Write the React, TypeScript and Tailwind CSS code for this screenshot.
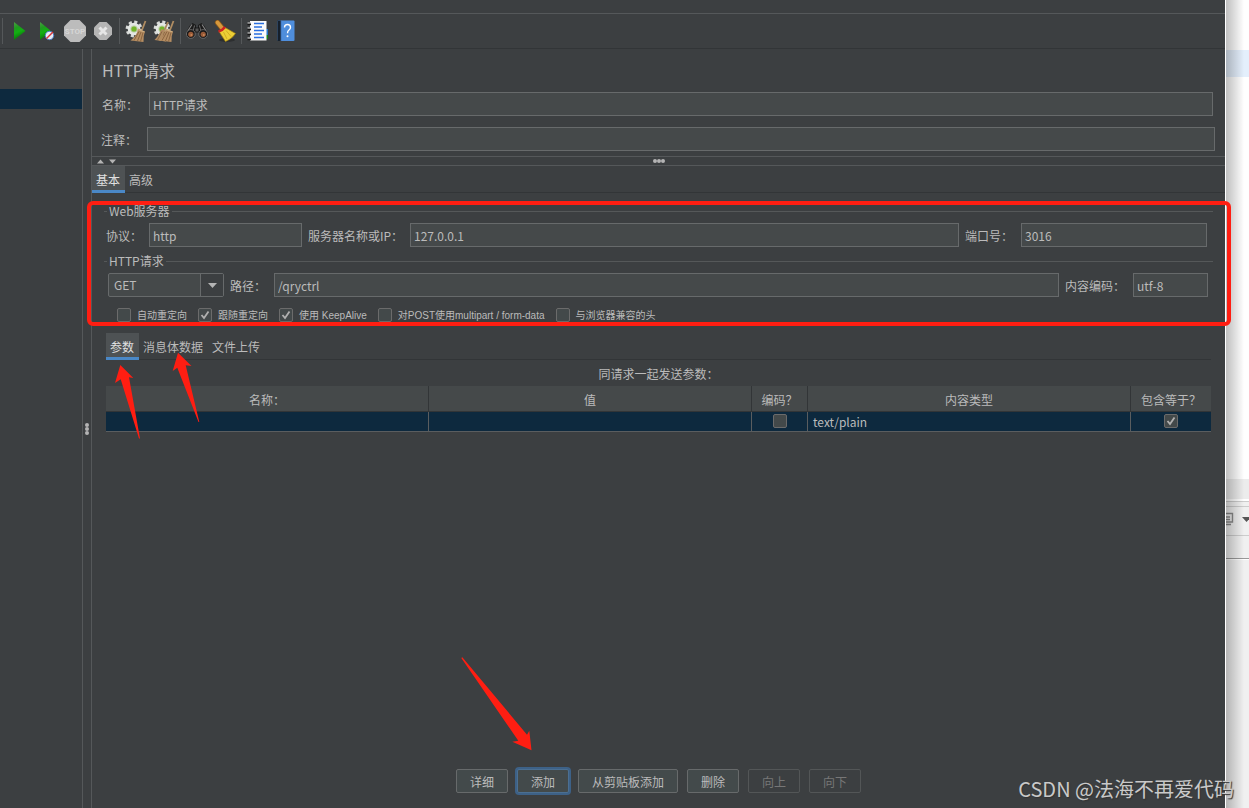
import { useState } from "react";
import type { ReactNode } from "react";

const FIELD =
  "h-6 min-w-0 border border-[#676a6b] bg-[#45494a] px-[3px] text-[#bbbbbb] outline-none";

function PlayIcon({ muted }: { muted?: boolean }) {
  return (
    <svg width="22" height="22" viewBox="0 0 22 22">
      <defs>
        <linearGradient id="play" x1="0" y1="0" x2="0.3" y2="1">
          <stop offset="0" stopColor="#4c9c44" />
          <stop offset="0.35" stopColor="#1f9a1f" />
          <stop offset="0.6" stopColor="#12b012" />
          <stop offset="1" stopColor="#0a6c0a" />
        </linearGradient>
      </defs>
      {muted ? (
        <>
          <path d="M4 2L15 11L4 20Z" fill="url(#play)" />
          <circle cx="13.500" cy="15.500" r="4.200" fill="#e6ecf5" stroke="#4b7cc4" strokeWidth="1" />
          <path d="M10.500 18.500L17 12" stroke="#d8363a" strokeWidth="1.500" />
        </>
      ) : (
        <path d="M6 2L17.500 11L6 20Z" fill="url(#play)" />
      )}
    </svg>
  );
}

function StopIcon() {
  return (
    <svg width="22" height="22" viewBox="0 0 22 22">
      <path d="M6.500 0H15.500L22 6.500V15.500L15.500 22H6.500L0 15.500V6.500Z" fill="#bcbcbc" />
      <text
        x="11"
        y="14"
        textAnchor="middle"
        fontSize="8"
        fontFamily="Roboto, sans-serif"
        fontWeight="bold"
        fill="#d6d6d6"
      >
        STOP
      </text>
    </svg>
  );
}

function ShutdownIcon() {
  return (
    <svg width="22" height="22" viewBox="0 0 22 22">
      <path d="M7.500 2H14.500L20 7.500V14.500L14.500 20H7.500L2 14.500V7.500Z" fill="#b5b5b5" />
      <path d="M7.500 7.500L14.500 14.500M14.500 7.500L7.500 14.500" stroke="#e6e6e6" strokeWidth="3" />
    </svg>
  );
}

function Gear() {
  return (
    <>
      <circle cx="9" cy="9" r="7" fill="none" stroke="#d9dbd9" strokeWidth="2.800" strokeDasharray="3.100 2.400" />
      <circle cx="9" cy="9" r="6.300" fill="#e4e7e4" />
      <circle cx="9" cy="9" r="3.600" fill="#b9cda0" />
      <circle cx="9" cy="9" r="2.600" fill="#73b52a" />
    </>
  );
}

function SweepIcon({ all }: { all?: boolean }) {
  return (
    <svg width="22" height="22" viewBox="0 0 22 22">
      <Gear />
      {all && (
        <>
          <path d="M15 2L11.500 10" stroke="#a8865c" strokeWidth="1.800" />
          <path d="M8 9L14 11L13 21.500L1.500 20Q6.500 15 8 9Z" fill="#b08a61" />
          <path d="M9 11.500L4.500 20M11.500 12L9 21" stroke="#7f5d3b" strokeWidth="0.800" />
        </>
      )}
      <path d="M20.500 1L17 10" stroke="#b08d62" strokeWidth="1.800" />
      <path d="M13 8.500L20 11.500Q18 16 18.500 22L5.500 20.500Q12 16 13 8.500Z" fill="#b58d62" />
      <path
        d="M14 11.500L9 20.500M16 12L12.500 21M18 12.500L15.500 21.500"
        stroke="#84603c"
        strokeWidth="0.900"
      />
      <path d="M13 9.500L19.500 12" stroke="#cfae82" strokeWidth="1.200" />
    </svg>
  );
}

function BinocularsIcon() {
  return (
    <svg width="22" height="22" viewBox="0 0 22 22">
      <path d="M6.500 3L10 5V11L9 13L0 16Q0.500 10 3.500 6Z" fill="#1b1b1b" />
      <path d="M15.500 3L12 5V11L13 13L22 16Q21.500 10 18.500 6Z" fill="#1b1b1b" />
      <path d="M6 4.500L1.800 11M16 4.500L20.200 11" stroke="#858585" strokeWidth="1.100" />
      <path d="M8.500 5.500L7.500 10M13.500 5.500L14.500 10" stroke="#777777" strokeWidth="0.900" />
      <rect x="9" y="8" width="4" height="4" fill="#555555" stroke="#111" strokeWidth="0.800" />
      <circle cx="4.800" cy="14" r="4.400" fill="#191919" stroke="#777" strokeWidth="0.800" />
      <circle cx="17.200" cy="14" r="4.400" fill="#191919" stroke="#777" strokeWidth="0.800" />
      <circle cx="4.800" cy="14.300" r="2.600" fill="#9a5b38" />
      <circle cx="17.200" cy="14.300" r="2.600" fill="#9a5b38" />
      <circle cx="5.400" cy="14.900" r="1" fill="#c9875a" />
      <circle cx="17.800" cy="14.900" r="1" fill="#c9875a" />
    </svg>
  );
}

function BroomIcon() {
  return (
    <svg width="22" height="22" viewBox="0 0 22 22">
      <ellipse cx="13" cy="20" rx="8" ry="1.800" fill="#2d2f30" />
      <path d="M3.500 2.500L8 8" stroke="#8b5a1b" strokeWidth="5.200" strokeLinecap="round" />
      <path d="M3.500 2.500L8 8" stroke="#d7993d" strokeWidth="3.600" strokeLinecap="round" />
      <path d="M11 7.500L21.500 13.500Q18 19 11.500 21.500L5 11.500Z" fill="#edcf36" stroke="#a5820d" strokeWidth="0.700" />
      <path d="M9.500 12L13 19M12 10.500L17 16.500" stroke="#c9a51d" strokeWidth="0.800" />
      <path d="M4.500 11.500Q8.500 10.500 11 7" stroke="#cf2222" strokeWidth="2.600" fill="none" />
    </svg>
  );
}

function NotebookIcon() {
  return (
    <svg width="22" height="22" viewBox="0 0 22 22">
      <path d="M17 9H21V15H17Z" fill="#2575c9" />
      <path d="M17 15H21V19H17Z" fill="#178417" />
      <rect x="3" y="1" width="16.500" height="19.500" fill="#fafafa" />
      <path d="M7 3.500H17M7 7H15M7 10.500H17M7 14H15M7 17.500H17" stroke="#2a6fe0" strokeWidth="1.300" />
      <path d="M0.500 4H4M0.500 9H4M0.500 14H4M0.500 19H4" stroke="#161616" strokeWidth="2.400" />
      <path d="M0.500 3H4M0.500 8H4M0.500 13H4M0.500 18H4" stroke="#e9e9e9" strokeWidth="1.200" />
    </svg>
  );
}

function HelpIcon() {
  return (
    <svg width="22" height="22" viewBox="0 0 22 22">
      <rect x="2.500" y="0.500" width="17" height="20.500" rx="1" fill="#4f8edc" />
      <path d="M2.500 0.500H6V21H2.500Z" fill="#16202c" />
      <path d="M6 0.500V21" stroke="#3a6fb4" strokeWidth="0.800" />
      <path
        d="M9.500 7.500Q9.500 4.500 12.500 4.500Q15.500 4.500 15.500 7.300Q15.500 9 14 10Q12.500 11 12.500 13.200"
        fill="none"
        stroke="#fff"
        strokeWidth="1.400"
      />
      <circle cx="12.500" cy="16.300" r="1" fill="#fff" />
    </svg>
  );
}

const TOOL_GROUPS: { label: string; icon: ReactNode }[][] = [
  [
    { label: "启动", icon: <PlayIcon /> },
    { label: "不停顿开始", icon: <PlayIcon muted /> },
    { label: "停止", icon: <StopIcon /> },
    { label: "关闭", icon: <ShutdownIcon /> },
  ],
  [
    { label: "清除", icon: <SweepIcon /> },
    { label: "清除全部", icon: <SweepIcon all /> },
  ],
  [
    { label: "查找", icon: <BinocularsIcon /> },
    { label: "重置查找", icon: <BroomIcon /> },
  ],
  [
    { label: "函数助手", icon: <NotebookIcon /> },
    { label: "帮助", icon: <HelpIcon /> },
  ],
];

function Toolbar() {
  return (
    <div className="flex items-center border-b border-[#323537] py-1 pl-[2px]">
      {TOOL_GROUPS.map((group, i) => (
        <div key={i} className="flex items-center gap-[6px] border-l border-[#55585a] px-[5px] py-px">
          {group.map((tool) => (
            <button key={tool.label} type="button" aria-label={tool.label} className="h-6 w-[22px]">
              {tool.icon}
            </button>
          ))}
        </div>
      ))}
    </div>
  );
}

function Tabs({ items }: { items: string[] }) {
  const [active, setActive] = useState(items[0]);
  return (
    <div role="tablist" className="flex h-[27px] shadow-[inset_0_-1px_0_#323537]">
      {items.map((item) => (
        <button
          key={item}
          type="button"
          role="tab"
          aria-selected={item === active}
          onClick={() => setActive(item)}
          className={
            item === active
              ? "border-b-3 border-[#4a88c7] bg-[#4e5254] pt-1 pr-[5px] pl-1 text-[#e0e0e0]"
              : "border-b-3 border-transparent pt-1 pr-[5px] pl-1"
          }
        >
          {item}
        </button>
      ))}
    </div>
  );
}

function GroupTitle({ children }: { children: ReactNode }) {
  return (
    <div className="flex h-4 items-center gap-[2px] px-3">
      <span className="h-px w-[3px] bg-[#555859]" />
      <h2>{children}</h2>
      <span className="h-px flex-1 bg-[#555859]" />
    </div>
  );
}

function Label({ id, className, children }: { id: string; className: string; children: string }) {
  return (
    <label htmlFor={id} className={`pt-[2px] whitespace-nowrap ${className}`}>
      {children}
    </label>
  );
}

function Tick({ label, checked }: { label: string; checked?: boolean }) {
  return (
    <span className="relative inline-block size-[14px]">
      <input
        id={label}
        type="checkbox"
        aria-label={label}
        defaultChecked={checked}
        className="peer block size-[14px] appearance-none rounded-xs border border-[#6b6b6b] bg-[#43494a]"
      />
      <svg
        viewBox="0 0 14 14"
        className="pointer-events-none absolute inset-0 hidden size-[14px] peer-checked:block"
      >
        <path d="M3.500 7L6 10L10.500 3.500" fill="none" stroke="#b0b0b0" strokeWidth="1.800" />
      </svg>
    </span>
  );
}

// Grip shown in the middle of a split divider
function Grip() {
  return (
    <>
      <span className="size-1 rounded-full bg-[#b4b4b4]" />
      <span className="size-1 rounded-full bg-[#b4b4b4]" />
      <span className="size-1 rounded-full bg-[#b4b4b4]" />
    </>
  );
}

const OPTIONS = [
  { label: "自动重定向" },
  { label: "跟随重定向", checked: true },
  { label: "使用 KeepAlive", checked: true },
  { label: "对POST使用multipart / form-data" },
  { label: "与浏览器兼容的头" },
];

function RequestForm() {
  return (
    <>
      <div className="mt-[10px]">
        <GroupTitle>Web服务器</GroupTitle>
      </div>
      <div className="mt-1 flex items-center pr-[18px] pl-[14px]">
        <Label id="protocol" className="w-[43px]">协议：</Label>
        <input id="protocol" defaultValue="http" className={`${FIELD} w-[153px]`} />
        <Label id="server" className="w-[108px] pl-[6px]">服务器名称或IP：</Label>
        <input id="server" defaultValue="127.0.0.1" className={`${FIELD} flex-1`} />
        <Label id="port" className="w-[62px] pl-[6px]">端口号：</Label>
        <input id="port" defaultValue="3016" className={`${FIELD} w-[186px]`} />
      </div>

      <div className="mt-[6px]">
        <GroupTitle>HTTP请求</GroupTitle>
      </div>
      <div className="mt-1 flex items-center pr-[17px] pl-4">
        <div className="relative">
          <select
            aria-label="方法"
            className="block h-6 w-[116px] appearance-none rounded-xs border border-[#676a6b] bg-[#45494a] pl-[5px] outline-none"
          >
            <option>GET</option>
            <option>POST</option>
            <option>PUT</option>
            <option>DELETE</option>
          </select>
          <span className="pointer-events-none absolute inset-y-px right-px flex w-[23px] items-center justify-center border-l border-[#676a6b] bg-[#3c3f41]">
            <svg width="9" height="5" viewBox="0 0 9 5">
              <path d="M0 0H9L4.500 5Z" fill="#b4b4b4" />
            </svg>
          </span>
        </div>
        <Label id="path" className="w-[50px] pl-[6px]">路径：</Label>
        <input id="path" defaultValue="/qryctrl" className={`${FIELD} flex-1`} />
        <Label id="encoding" className="w-[74px] pl-[6px]">内容编码：</Label>
        <input id="encoding" defaultValue="utf-8" className={`${FIELD} w-[75px]`} />
      </div>

      <div className="mt-[10px] flex h-4 items-center gap-[11px] pl-[25px] font-['Liberation_Sans','Noto_Sans_CJK_SC',sans-serif] text-[10px]">
        {OPTIONS.map((o) => (
          <span key={o.label} className="flex items-center gap-[6px]">
            <Tick label={o.label} checked={o.checked} />
            <label htmlFor={o.label} className="pt-[2px]">{o.label}</label>
          </span>
        ))}
      </div>
    </>
  );
}

function ParamsTable() {
  const th = "border-r border-b border-[#323537] pt-[2px] pb-0 font-normal last:border-r-0";
  const td = "border-r border-b border-[#5a5d5f] leading-none last:border-r-0";
  return (
    <table className="w-full table-fixed border-separate border-spacing-0">
      <colgroup>
        <col />
        <col />
        <col className="w-[56px]" />
        <col />
        <col className="w-[80px]" />
      </colgroup>
      <thead>
        <tr className="h-[26px] bg-[#45494a]">
          <th className={th}>名称：</th>
          <th className={th}>值</th>
          <th className={th}>编码？</th>
          <th className={th}>内容类型</th>
          <th className={th}>包含等于？</th>
        </tr>
      </thead>
      <tbody>
        <tr className="h-5 bg-[#0d293e]">
          <td className={td} />
          <td className={td} />
          <td className={`${td} text-center`}>
            <Tick label="编码" />
          </td>
          <td className={`${td} pl-[5px]`}>text/plain</td>
          <td className={`${td} text-center`}>
            <Tick label="包含等于" checked />
          </td>
        </tr>
      </tbody>
    </table>
  );
}

const ACTIONS = [
  { label: "详细" },
  { label: "添加", focused: true },
  { label: "从剪贴板添加" },
  { label: "删除" },
  { label: "向上", disabled: true },
  { label: "向下", disabled: true },
];

function Actions() {
  return (
    <div className="flex justify-center gap-[9px] pb-[15px]">
      {ACTIONS.map((a) => {
        let look = "border-[#676a6b] bg-[#434a4b]";
        if (a.focused) look = "border-[#4b6f92] bg-[#434a4b] ring-2 ring-[#3d6187]";
        if (a.disabled) look = "border-[#535657] text-[#777777]";
        return (
          <button
            key={a.label}
            type="button"
            disabled={a.disabled}
            className={`h-6 rounded-xs border px-[13px] pt-[2px] ${look}`}
          >
            {a.label}
          </button>
        );
      })}
    </div>
  );
}

// Slice of the window that sits behind the main one
function BackWindow() {
  return (
    <div className="relative flex w-6 shrink-0 flex-col overflow-hidden border-l border-white bg-white">
      <div className="mt-[50px] h-[27px] bg-[#e4effc]" />
      <div className="mt-[402px] h-5 bg-[#ececec]" />
      <div className="mt-[2px] h-[6px] border-y border-[#cccccc] bg-[#f0f0f0]" />
      <div className="flex h-[29px] items-center justify-between border-b border-[#cccccc] bg-[#f0f0f0] pb-1">
        <svg width="8" height="14" viewBox="0 0 8 14">
          <path d="M0 1.500H6.500V10H0M0 5H4M0 7.500H4M0 12.500H5" fill="none" stroke="#8b8b8b" strokeWidth="1.400" />
        </svg>
        <svg width="7" height="5" viewBox="0 0 7 5">
          <path d="M0 0H9L4.500 5Z" fill="#555555" />
        </svg>
      </div>
      <div className="h-[23px] border-b border-[#999999] bg-[#f0f0f0]" />
      <div className="mt-px flex-1 bg-[#f0f0f0]" />
      <div className="pointer-events-none absolute inset-y-0 left-0 w-[18px] bg-linear-to-r from-black/25 to-transparent" />
    </div>
  );
}

function Annotations() {
  return (
    <>
      <div className="pointer-events-none absolute top-[201px] right-[18px] left-[87px] h-[125px] rounded-md border-4 border-[#ff1e12]" />
      <svg
        width="600"
        height="800"
        viewBox="0 0 600 800"
        className="pointer-events-none absolute top-0 left-0"
        fill="#ff1e12"
      >
        <path d="M120.300 365L115 383L120.700 379.300L139 438.500L140 438.500L129 377.300L133.300 378Z" />
        <path d="M178 352.700L172.700 371L177.300 367.700L198.500 422L199.300 422L185.700 365.300L191.500 366Z" />
        <path d="M461.300 658L462.300 657.300L527 734.700L529.300 730.700L531.500 750.300L512.300 741.700L518.300 740.700Z" />
      </svg>
      <p className="pointer-events-none absolute right-[15px] bottom-[5px] text-xl leading-7 whitespace-nowrap text-[#c9c9c9] [text-shadow:1px_1px_1px_#333333]">
        CSDN @法海不再爱代码
      </p>
    </>
  );
}

export default function App() {
  return (
    <div className="relative flex min-h-screen overflow-hidden bg-[#3c3f41] font-['Noto_Sans_CJK_SC',sans-serif] text-xs leading-4 text-[#bbbbbb]">
      <div className="flex min-w-0 flex-1 flex-col">
        <div className="h-[14px] border-b border-[#55585a]" />
        <Toolbar />
        <div className="flex flex-1">
          <aside className="w-[83px] shrink-0 border-r border-[#55585a] pt-10">
            <div className="h-5 bg-[#0d293e]" />
          </aside>
          <div className="flex w-[9px] shrink-0 flex-col items-center justify-center border-r border-[#55585a]">
            <Grip />
          </div>

          <main className="flex min-w-0 flex-1 flex-col">
            <h1 className="pt-[9px] pl-[10px] text-base leading-6">HTTP请求</h1>
            <div className="mt-[10px] flex items-center pr-3 pl-[10px]">
              <Label id="name" className="w-[47px]">名称：</Label>
              <input id="name" defaultValue="HTTP请求" className={`${FIELD} flex-1`} />
            </div>
            <div className="mt-[11px] flex items-center pr-[10px] pl-[9px]">
              <Label id="comment" className="w-[46px]">注释：</Label>
              <input id="comment" className={`${FIELD} flex-1`} />
            </div>

            <div className="relative mt-[5px] flex h-[10px] items-center justify-center border-y border-[#55585a]">
              <svg width="20" height="5" viewBox="0 0 20 5" className="absolute left-[5px]" fill="#b4b4b4">
                <path d="M0 4.500L3.500 0.500L7 4.500Z" />
                <path d="M12 0.500H19L15.500 4.500Z" />
              </svg>
              <Grip />
            </div>

            <Tabs items={["基本", "高级"]} />
            <RequestForm />

            <div className="mt-[10px] flex flex-1 flex-col px-[14px]">
              <Tabs items={["参数", "消息体数据", "文件上传"]} />
              <p className="mt-[6px] mb-1 text-center">同请求一起发送参数：</p>
              <ParamsTable />
            </div>
            <Actions />
          </main>
        </div>
      </div>
      <BackWindow />
      <Annotations />
    </div>
  );
}
